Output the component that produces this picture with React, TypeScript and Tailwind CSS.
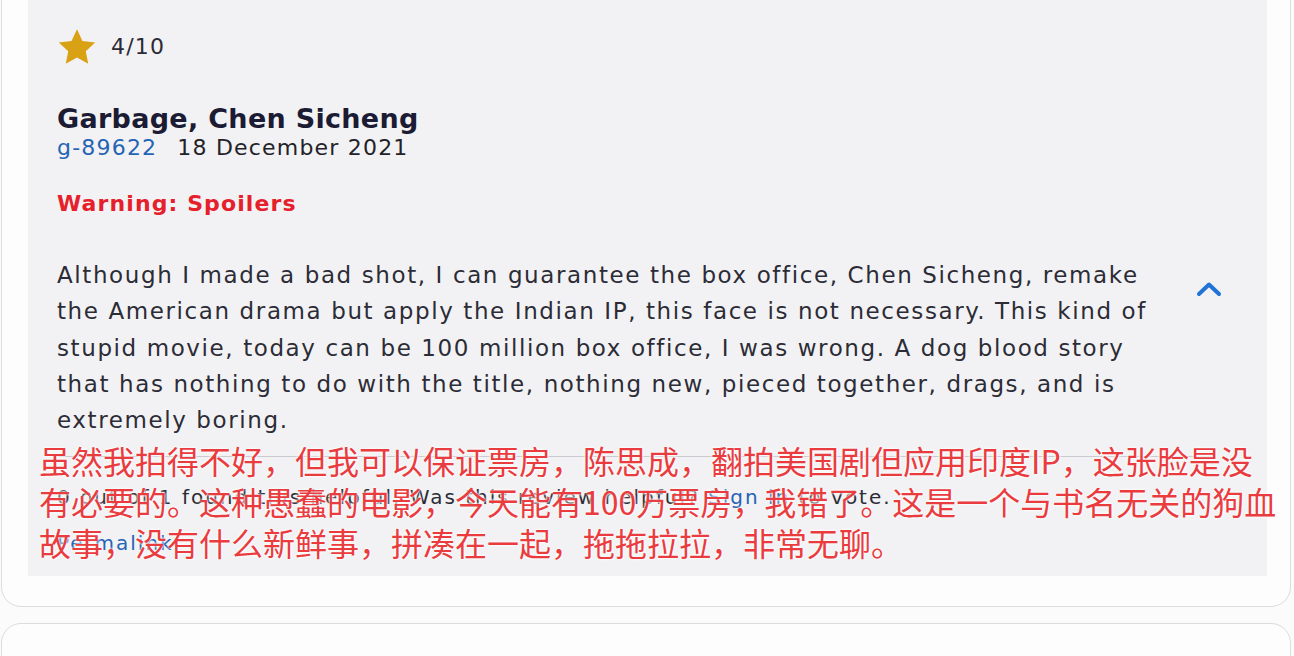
import React from "react";

const verdana = { fontFamily: '"DejaVu Sans", Verdana, sans-serif' };

function Star() {
  return (
    <svg width="40" height="38" viewBox="0 0 24 23" aria-hidden="true">
      <path
        d="M12 0.8l3.3 7.1 7.7.9-5.7 5.3 1.5 7.6L12 17.9l-6.8 3.8 1.5-7.6L1 8.8l7.7-.9z"
        fill="#d9a114"
      />
    </svg>
  );
}

function ChevronUp() {
  return (
    <svg width="26" height="18" viewBox="0 0 26 18" aria-hidden="true">
      <path d="M3 14L13 4.5 23 14" fill="none" stroke="#1f74d6" strokeWidth="4" strokeLinecap="round" strokeLinejoin="round" />
    </svg>
  );
}

export default function App() {
  return (
    <div className="w-[1294px] h-[656px] overflow-hidden bg-[#fbfbfb]" style={verdana}>
      <div className="flex flex-col gap-[16px] mt-[-40px]">
        {/* review card */}
        <div className="mx-[1px] w-[1290px] h-[647px] rounded-[20px] border border-[#dcdcdc] bg-[#fdfdfd] pl-[26px] pr-[23px] pb-[30px]">
          <div className="relative h-full bg-[#f2f2f4] pl-[29px] pt-[66px]">
            <div className="flex items-center gap-[14px] h-[40px]">
              <Star />
              <span className="text-[22px] text-[#2b2b36] leading-none tracking-[1.2px]">4/10</span>
            </div>
            <div className="mt-[36px] text-[27px] leading-[32px] font-bold text-[#1b1b33] tracking-[0.3px]">
              Garbage, Chen Sicheng
            </div>
            <div className="flex gap-[20px] text-[22px] leading-[28px] mt-[-1px] tracking-[1.2px]">
              <span className="text-[#2563b4]">g-89622</span>
              <span className="text-[#222228]">18 December 2021</span>
            </div>
            <div className="mt-[28px] text-[22px] leading-[28px] font-bold text-[#e5202b] tracking-[1.1px]">
              Warning: Spoilers
            </div>
            <div className="flex mt-[39px]">
              <p className="w-[1130px] whitespace-nowrap text-[23px] leading-[36.3px] text-[#2c2c36] tracking-[1.6px]">
                Although I made a bad shot, I can guarantee the box office, Chen Sicheng, remake
                <br />
                the American drama but apply the Indian IP, this face is not necessary. This kind of
                <br />
                stupid movie, today can be 100 million box office, I was wrong. A dog blood story
                <br />
                that has nothing to do with the title, nothing new, pieced together, drags, and is
                <br />
                extremely boring.
              </p>
              <div className="ml-[9px] mt-[23px]">
                <ChevronUp />
              </div>
            </div>
            <div className="mt-[18px] mr-[55px] border-t border-[#c9c9cf]" />
            <div className="mt-[27px] text-[20px] leading-[26px] text-[#2c2c36] tracking-[2px] whitespace-nowrap">
              0 out of 1 found this helpful. Was this review helpful?{" "}
              <span className="text-[#2563b4]">Sign in</span> to vote.
            </div>
            <div className="mt-[20px] text-[20px] leading-[26px] text-[#2563b4] tracking-[2px]">Permalink</div>

            {/* translation overlay */}
            <div
              className="absolute left-[11px] top-[479px] whitespace-nowrap text-[32px] leading-[41px] text-[#ea3b3f] [text-shadow:0_0_3px_#ffffff,0_0_3px_#ffffff]"
              style={{ fontFamily: '"Noto Sans CJK SC", "Noto Sans", sans-serif' }}
            >
              <div>虽然我拍得不好，但我可以保证票房，陈思成，翻拍美国剧但应用印度IP，这张脸是没</div>
              <div>有必要的。这种愚蠢的电影，今天能有100万票房，我错了。这是一个与书名无关的狗血</div>
              <div>故事，没有什么新鲜事，拼凑在一起，拖拖拉拉，非常无聊。</div>
            </div>
          </div>
        </div>
        {/* next card */}
        <div className="mx-[1px] w-[1290px] h-[200px] rounded-[20px] border border-[#dcdcdc] bg-[#fdfdfd]" />
      </div>
    </div>
  );
}
